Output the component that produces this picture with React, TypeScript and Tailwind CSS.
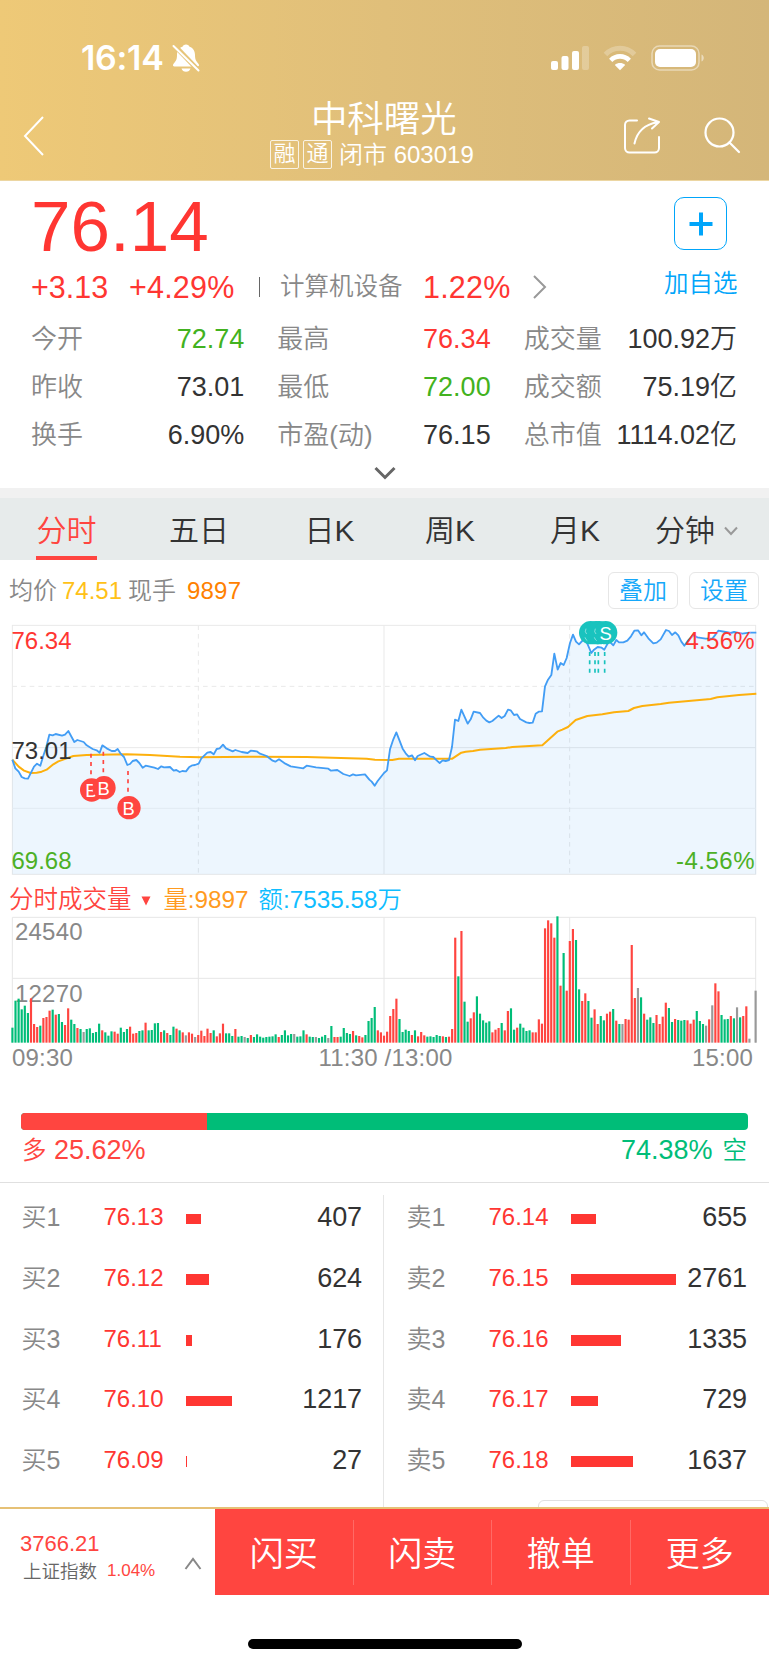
import clsx from "clsx";

type Quote = { label: string; value: string; color?: string };
type Order = { label: string; price: string; amount: number; bar: number };

const quotes: Quote[] = [
    { label: "今开", value: "72.74", color: "text-[#42b220]" },
    { label: "最高", value: "76.34", color: "text-[#ff3632]" },
    { label: "成交量", value: "100.92万" },
    { label: "昨收", value: "73.01" },
    { label: "最低", value: "72.00", color: "text-[#42b220]" },
    { label: "成交额", value: "75.19亿" },
    { label: "换手", value: "6.90%" },
    { label: "市盈(动)", value: "76.15" },
    { label: "总市值", value: "1114.02亿" },
];

const buyOrders: Order[] = [
    { label: "买1", price: "76.13", amount: 407, bar: 15.5 },
    { label: "买2", price: "76.12", amount: 624, bar: 23.5 },
    { label: "买3", price: "76.11", amount: 176, bar: 6 },
    { label: "买4", price: "76.10", amount: 1217, bar: 46 },
    { label: "买5", price: "76.09", amount: 27, bar: 1 },
];

const sellOrders: Order[] = [
    { label: "卖1", price: "76.14", amount: 655, bar: 25.5 },
    { label: "卖2", price: "76.15", amount: 2761, bar: 105 },
    { label: "卖3", price: "76.16", amount: 1335, bar: 50 },
    { label: "卖4", price: "76.17", amount: 729, bar: 27.5 },
    { label: "卖5", price: "76.18", amount: 1637, bar: 62 },
];

// chart data is in 3x units, the svg viewBox scales it down
const priceLine =
    "37,824 46,850 56,860 65,876 74,880 84,881 102,845 111,836 121,842 130,812 139,785 148,749 158,751 167,747 186,752 195,749 205,738 223,771 232,765 251,771 260,781 278,792 290,796 299,803 307,781 320,790 335,798 345,798 353,792 362,806 372,816 382,840 390,837 398,828 409,825 418,834 428,848 437,842 463,848 474,852 484,844 492,847 510,846 521,857 529,855 539,861 547,858 558,859 567,847 577,841 585,840 596,836 604,820 622,803 632,801 641,808 650,792 659,790 669,779 678,790 698,799 706,795 725,801 743,804 752,797 770,799 780,806 800,813 818,827 826,830 837,823 856,836 872,844 910,850 920,842 948,847 985,851 993,857 1012,855 1030,867 1049,873 1059,868 1068,871 1095,868 1108,884 1115,890 1124,902 1133,888 1152,864 1161,856 1170,793 1180,763 1189,742 1208,791 1217,805 1226,815 1236,811 1245,826 1253,813 1273,804 1291,815 1300,816 1310,826 1319,834 1328,826 1337,828 1347,825 1356,786 1365,704 1375,708 1384,674 1403,716 1412,703 1421,680 1440,684 1450,698 1459,707 1468,712 1477,708 1496,692 1505,699 1514,693 1524,674 1532,676 1542,690 1551,688 1560,702 1579,712 1588,714 1598,713 1607,686 1616,680 1626,679 1635,604 1644,584 1654,570 1663,506 1673,554 1682,534 1691,540 1700,519 1710,474 1719,449 1728,470 1737,478 1752,462 1763,478 1774,504 1782,494 1793,486 1805,488 1813,494 1827,468 1840,481 1849,465 1857,472 1870,472 1882,467 1893,454 1903,437 1914,436 1924,451 1932,442 1945,460 1960,475 1970,473 1982,463 1998,435 2007,438 2016,450 2026,442 2035,451 2044,470 2053,482 2063,468 2080,450 2092,457 2117,461 2137,461 2147,448 2155,437 2177,441 2192,444 2202,441 2227,446 2247,443 2269,443";

const averageLine =
    "37,824 56,845 72,857 92,864 110,863 125,860 140,854 160,838 175,829 200,820 220,813 260,810 380,808 450,810 540,815 600,817 750,815 920,816 1100,821 1125,824 1177,825 1197,821 1357,821 1384,803 1397,800 1419,798 1440,794 1517,789 1537,786 1627,781 1672,740 1687,734 1704,726 1727,705 1762,693 1807,688 1842,682 1885,678 1902,669 1927,663 1982,657 2007,653 2132,642 2152,637 2217,630 2269,626";

// one entry per minute: g = down, r = up, n = flat
const volumes = (
    "g45 g126 g132 g100 g111 g89 r133 r56 r47 g51 r74 r77 r96 g99 r84 g86 g62 r53 r103 g69 " +
    "g56 r44 g41 n32 g41 g43 g29 g32 g57 r37 g31 g21 g34 r33 r27 g45 g32 g41 r48 r27 " +
    "r29 g35 g37 r60 g37 g38 g58 g59 r32 g37 r29 g23 g48 r42 g37 r31 n22 r31 r27 n17 " +
    "r23 r36 r20 r42 r29 g37 r19 r28 r57 g28 g28 g20 r41 g18 g20 n17 g14 r23 g17 g25 " +
    "g18 g15 g17 g18 g19 g25 r17 g23 g37 g22 g26 n26 g18 g19 g37 r25 g18 g17 n17 g14 " +
    "g18 g23 n14 g50 r17 r17 g18 g44 g29 g26 r35 g22 r20 r16 g23 g65 g74 g107 r37 r31 " +
    "r21 r33 r80 r101 r132 g71 g32 g39 g35 r23 g37 r19 r32 r22 g18 g19 g17 g23 g20 r19 " +
    "g17 r18 r41 r315 g199 r335 g123 g63 r73 r91 g139 g87 g67 g60 g64 r31 r39 r44 g59 r37 " +
    "r95 g103 g39 r45 g57 g45 g35 g37 r31 r31 r70 r57 r343 r367 r358 r315 g379 r171 g269 r156 " +
    "r305 r341 g308 g160 r125 r148 g125 g75 r100 r56 g80 g67 r87 r93 g101 r66 g56 n56 r71 r69 " +
    "r293 r134 n164 g136 r87 g69 g76 g59 r83 r56 r78 r120 g104 g62 r71 g68 g66 g68 r67 r57 " +
    "r69 g95 g65 g56 n51 r70 n112 r178 r154 g83 g70 g71 r80 g73 n106 g76 r80 r109 n12 n0 n156"
).split(" ");

const volumeColors: Record<string, string> = { g: "#00bd78", r: "#ff4540", n: "#999999" };

const buyMarks = [
    { x: 275, y: 915, line: 273, from: 806 },
    { x: 312, y: 908, line: 310, from: 800 },
    { x: 387, y: 968, line: 384, from: 858 },
];
const sellMarks = [1772, 1788, 1798, 1817];

function StatusBar() {
    return (
        <div className="flex h-[58px] items-center pt-[1px] pl-[81px] pr-[64px]">
            <span className="font-['Inter'] text-[34px] leading-none font-semibold tracking-[-0.3px]">16:14</span>
            <svg className="ml-[8px] h-[30px] w-[28px]" viewBox="0 0 28 30">
                <path
                    d="M14 1.5c-1.800 0-3 1-3.500 2.200C6.500 5 5 8.500 5 12c0 5-1.500 6.500-3.600 9-.9 1.200-.3 2.500 1.100 2.500h23c1.400 0 2-1.300 1.100-2.500C24.500 18.500 23 17 23 12c0-3.500-1.500-7-5.500-8.300C17 2.500 15.800 1.500 14 1.500z"
                    fill="#fff"
                />
                <path d="M9.500 25.500h9c-.5 2-2.300 3.300-4.500 3.300s-4-1.300-4.500-3.300z" fill="#fff" />
                <path d="M1 1L28 29" stroke="#e7c57a" strokeWidth="5" />
                <path d="M1.500 3L26.500 27.500" stroke="#fff" strokeWidth="2" strokeLinecap="round" />
            </svg>
            <svg className="ml-auto h-[26px] w-[39px]" viewBox="0 0 39 26" fill="#fff">
                <rect x="0" y="16" width="7" height="9" rx="2" />
                <rect x="10.500" y="11" width="7" height="14" rx="2" />
                <rect x="21" y="6" width="7" height="19" rx="2" />
                <rect x="31" y="1" width="7" height="24" rx="2" opacity="0.25" />
            </svg>
            <svg className="ml-[13px] h-[26px] w-[34px]" viewBox="0 0 34 26" fill="none" stroke="#fff">
                <path d="M2.500 9.500C10.500 1.200 23.500 1.200 31.500 9.500" strokeWidth="5" opacity="0.25" />
                <path d="M7.700 15.300C13 10 21 10 26.300 15.300" strokeWidth="4.600" />
                <path d="M17 25.200L11.800 20c2.900-2.600 7.500-2.600 10.400 0z" fill="#fff" stroke="none" />
            </svg>
            <svg className="ml-[14px] h-[26px] w-[54px]" viewBox="0 0 54 26">
                <rect x="1" y="1" width="47" height="24" rx="7.500" fill="none" stroke="#fff" strokeWidth="1.500" opacity="0.45" />
                <rect x="4" y="4" width="41" height="18" rx="5" fill="#fff" />
                <path d="M50.500 9.500c3 1.200 3 5.800 0 7z" fill="#fff" opacity="0.5" />
            </svg>
        </div>
    );
}

function Header() {
    return (
        <header className="h-[181px] border-b border-[#ecd6a2] bg-linear-to-r from-[#eec977] via-[#e0bf7a] to-[#d4b679] pt-7 text-white">
            <StatusBar />
            <div className="flex h-[94px] items-start justify-between pt-[12px] pr-[28px] pl-[23px]">
                <svg className="mt-[17px] h-[42px] w-[22px]" viewBox="0 0 22 42" fill="none" stroke="#fff" strokeWidth="2">
                    <path d="M20 2L2 21L20 40" />
                </svg>
                <div className="ml-[225px] flex flex-col items-center">
                    <h1 className="h-[41px] pt-[1px] pl-[24px] text-[36.500px] leading-[42px]">中科曙光</h1>
                    <div className="flex h-[30px] items-center text-[24px] leading-[30px]">
                        <span className="mr-[4px] flex size-[29px] items-center justify-center rounded-[2px] border border-white/80 text-[22px]">
                            融
                        </span>
                        <span className="mr-[7px] flex size-[29px] items-center justify-center rounded-[2px] border border-white/80 text-[22px]">
                            通
                        </span>
                        <span className="pt-[2px]">闭市 603019</span>
                    </div>
                </div>
                <div className="ml-auto flex gap-[42px] pt-[19px]">
                    <svg className="h-[38px] w-[40px]" viewBox="0 0 40 38" fill="none" stroke="#fff" strokeWidth="2" strokeLinecap="round">
                        <path d="M16 3.500H8.500C6 3.500 4 5.500 4 8v23c0 2.500 2 4.500 4.500 4.500h25c2.500 0 4.500-2 4.500-4.500V20" />
                        <path d="M13.500 26.500C16 14.500 23 7.500 36.500 5.200M28 1.500L38 5l-7 6.500" strokeLinejoin="round" />
                    </svg>
                    <svg className="h-[38px] w-[38px]" viewBox="0 0 38 38" fill="none" stroke="#fff" strokeWidth="2.200">
                        <circle cx="16.500" cy="15.500" r="14" />
                        <path d="M26.500 25.500L36 35" strokeLinecap="round" />
                    </svg>
                </div>
            </div>
        </header>
    );
}

function Summary() {
    return (
        <section className="h-[307px] pt-[12px]">
            <div className="flex justify-between">
                <div className="pl-[31px] text-[#ff3632]">
                    <div className="h-[65px] pt-[1px] text-[71px] leading-[65px]">76.14</div>
                    <div className="mt-[11px] flex h-[36px] items-center text-[30.500px] leading-[36px]">
                        <span className="w-[98px]">+3.13</span>
                        <span className="w-[130px] tracking-[0.2px]">+4.29%</span>
                        <span className="mr-[20px] h-[20px] w-px bg-[#666]" />
                        <span className="w-[143px] text-[24.500px] text-[#888]">计算机设备</span>
                        <span className="w-[110px] tracking-[0.2px]">1.22%</span>
                        <svg className="h-[24px] w-[14px]" viewBox="0 0 14 24" fill="none" stroke="#999" strokeWidth="2">
                            <path d="M1 1L12 12L1 23" />
                        </svg>
                    </div>
                </div>
                <button className="mr-[30px] flex w-[76px] flex-col items-start pt-[4px] text-[24.500px] leading-[30px] text-[#00a5fa]">
                    <span className="ml-[11px] flex size-[53px] items-center justify-center rounded-[10px] border-[1.500px] border-[#00a5fa]">
                        <svg className="size-[24px]" viewBox="0 0 24 24" stroke="#00a5fa" strokeWidth="4">
                            <path d="M12 0.500V23.500M0.500 12H23.500" />
                        </svg>
                    </span>
                    <span className="mt-[19px] ml-px">加自选</span>
                </button>
            </div>
            <div className="mt-[10px] grid grid-cols-3 gap-x-[33px] pr-[32px] pl-[31px]">
                {quotes.map((quote) => (
                    <div key={quote.label} className="flex h-[48px] items-center justify-between whitespace-nowrap">
                        <span className="text-[26px] leading-[48px] text-[#888]">{quote.label}</span>
                        <span className={clsx("text-[27px] leading-[48px]", quote.color ?? "text-[#333]")}>{quote.value}</span>
                    </div>
                ))}
            </div>
            <svg className="mx-auto mt-[6px] h-[16px] w-[24px]" viewBox="0 0 24 16" fill="none" stroke="#666" strokeWidth="3">
                <path d="M2.500 3L12 12.500L21.500 3" />
            </svg>
        </section>
    );
}

function Tabs() {
    return (
        <nav className="grid h-[72px] grid-cols-[133px_132px_129px_112px_138px_1fr] border-t-[10px] border-[#f1f1f1] bg-[#e7ebeb] text-center text-[30px] leading-[65px] text-[#333]">
            <div className="flex flex-col items-center text-[#ff4540]">
                <span className="h-[58px]">分时</span>
                <span className="h-[4px] w-[61px] bg-[#ff4540]" />
            </div>
            <span>五日</span>
            <span>日K</span>
            <span>周K</span>
            <span>月K</span>
            <span className="flex items-center pl-[11px]">
                分钟
                <svg className="ml-[9px] h-[10px] w-[14px]" viewBox="0 0 14 10" fill="none" stroke="#999" strokeWidth="2">
                    <path d="M1 1.500L7 8L13 1.500" />
                </svg>
            </span>
        </nav>
    );
}

function PriceChart() {
    return (
        <div className="relative h-[272px] text-[24px] leading-[28px]">
            <svg className="h-[270px] w-[769px]" viewBox="0 375 2307 810" fill="none">
                <g stroke="#e9e9e9" strokeWidth="3">
                    <rect x="37" y="421" width="2230" height="747" />
                    <path d="M37 788H2267M1152 421V1168" />
                    <path d="M37 970H2267" stroke="#f2f2f2" />
                    <path d="M37 604H2267M595 421V1168M1709 421V1168" strokeDasharray="14 12" />
                </g>
                <polygon points={`37,1168 ${priceLine} 2269,1168`} fill="#3c9bf0" fillOpacity="0.09" />
                <polyline points={averageLine} stroke="#fdb00d" strokeWidth="6" strokeLinejoin="round" />
                <polyline points={priceLine} stroke="#429df5" strokeWidth="5.500" strokeLinejoin="round" />
                {buyMarks.map((mark) => (
                    <g key={mark.x}>
                        <path d={`M${mark.line} ${mark.from}v64`} stroke="#ff4540" strokeWidth="5" strokeDasharray="12 13" />
                        <circle cx={mark.x} cy={mark.y} r="35" fill="#ff4540" />
                        <text x={mark.x - 1} y={mark.y + 22} fill="#fff" fontSize="55" textAnchor="middle">
                            B
                        </text>
                    </g>
                ))}
                {sellMarks.map((x) => (
                    <g key={x}>
                        <path d={`M${x - 3} 501v64`} stroke="#19c3be" strokeWidth="5" strokeDasharray="12 13" />
                        <circle cx={x} cy="443" r="35" fill="#19c3be" />
                    </g>
                ))}
                <path d="M1758 431q-5 10 2 16M1755 457q2 7 7 10M1786 431q-5 10 2 16M1783 457q2 7 7 10" stroke="#fff" strokeWidth="2" opacity="0.7" />
                <text x="1817" y="466" fill="#fff" fontSize="55" textAnchor="middle">
                    S
                </text>
            </svg>
            <span className="absolute top-[17px] left-[11.500px] text-[#ff3632]">76.34</span>
            <span className="absolute top-[127px] left-[11.500px] text-[#333]">73.01</span>
            <span className="absolute top-[237px] left-[11.500px] text-[#4cb025]">69.68</span>
            <span className="absolute top-[17px] right-[14px] tracking-[0.3px] text-[#ff3632]">4.56%</span>
            <span className="absolute top-[237px] right-[14px] tracking-[0.5px] text-[#4cb025]">-4.56%</span>
        </div>
    );
}

function VolumeChart() {
    return (
        <div className="relative h-[128px] text-[24px] leading-[28px] text-[#888]">
            <span className="absolute top-[3px] left-[15px] tracking-[0.2px]">24540</span>
            <span className="absolute top-[65px] left-[15px] tracking-[0.2px]">12270</span>
            <svg className="relative h-[128px] w-[769px]" viewBox="0 120 2307 384">
                <path
                    d="M37 504V127H2267V504M37 310H2267M595 127V504M1152 127V504M1709 127V504"
                    fill="none"
                    stroke="#e6e6e6"
                    strokeWidth="3"
                />
                {volumes.map((volume, i) => {
                    const height = Number(volume.slice(1));
                    return (
                        <rect
                            key={i}
                            x={34 + i * 9.29}
                            y={503 - height}
                            width="6.500"
                            height={height}
                            fill={volumeColors[volume[0]]}
                        />
                    );
                })}
            </svg>
        </div>
    );
}

function OrderList({ orders, className }: { orders: Order[]; className: string }) {
    return (
        <div className={clsx("pt-[4px]", className)}>
            {orders.map((order) => (
                <div key={order.label} className="flex h-[60.700px] items-center leading-[60px]">
                    <span className="w-[82px] text-[25px] text-[#888]">{order.label}</span>
                    <span className="w-[82px] text-[24px] text-[#ff3632]">{order.price}</span>
                    <span className="mt-[3px] h-[10.700px] bg-[#ff3632]" style={{ width: order.bar }} />
                    <span className="ml-auto text-[27px] tracking-[-0.1px] text-[#333]">{order.amount}</span>
                </div>
            ))}
        </div>
    );
}

function BottomBar() {
    return (
        <footer className="relative flex h-[88px] border-t-2 border-[#e6c176] bg-white">
            <div className="flex w-[215px] items-center justify-between pt-[10px] pr-[13px] pl-[20px] text-[#ff4540]">
                <div>
                    <div className="text-[22px] leading-[28px]">3766.21</div>
                    <div className="flex text-[17px] leading-[26px]">
                        <span className="mr-[10px] pt-[1px] pl-[3px] text-[18.500px] text-[#666]">上证指数</span>
                        1.04%
                    </div>
                </div>
                <svg className="mt-[12px] h-[13px] w-[18px]" viewBox="0 0 18 13" fill="none" stroke="#888" strokeWidth="2">
                    <path d="M1.500 12L9 2L16.500 12" />
                </svg>
            </div>
            <div className="grid flex-1 grid-cols-4 items-center bg-[#ff4540] text-center text-[34px] text-white">
                {["闪买", "闪卖", "撤单", "更多"].map((name) => (
                    <button key={name} className="h-[65px] border-r border-white/20 pt-[2px] leading-[65px] last:border-r-0">
                        {name}
                    </button>
                ))}
            </div>
        </footer>
    );
}

export default function App() {
    return (
        <div className="h-[1665px] w-[769px] overflow-hidden bg-white font-['Liberation_Sans','Noto_Sans_CJK_SC',sans-serif] font-[350]">
            <Header />
            <Summary />
            <Tabs />
            <div className="flex h-[50px] items-center pt-[11px] pr-[10px] pl-[9px] text-[24px] leading-[36px]">
                <span className="w-[53px] text-[#888]">均价</span>
                <span className="w-[66px] text-[#ffc117]">74.51</span>
                <span className="w-[59px] text-[#888]">现手</span>
                <span className="tracking-[0.2px] text-[#ff8100]">9897</span>
                <button className="ml-auto h-[37px] w-[70px] rounded-[6px] border border-[#e6e6e6] text-[#16a8fa]">叠加</button>
                <button className="ml-[11px] h-[37px] w-[70px] rounded-[6px] border border-[#e6e6e6] text-[#16a8fa]">设置</button>
            </div>
            <PriceChart />
            <div className="flex h-[33px] items-center pt-[1px] pl-[9px] text-[24.500px] leading-[33px]">
                <span className="text-[#ff4540]">分时成交量</span>
                <svg className="mt-[3px] mr-[13px] ml-[9px] size-[10px]" viewBox="0 0 10 10" fill="#ff4540">
                    <path d="M0.500 0.500h9L5 9.500z" />
                </svg>
                <span className="mr-[10px] text-[24.300px] text-[#ff9b1f]">量:9897</span>
                <span className="text-[24.300px] text-[#0fbdff]">额:7535.58万</span>
            </div>
            <VolumeChart />
            <div className="flex h-[70px] justify-between pr-[16px] pl-[12px] text-[24px] leading-[29px] tracking-[0.2px] text-[#888]">
                <span>09:30</span>
                <span className="pl-[6px]">11:30 /13:00</span>
                <span>15:00</span>
            </div>
            <div className="mr-[21px] ml-[20.500px] flex h-[17px] overflow-hidden rounded-[4px] bg-[#00bd78]">
                <div className="bg-[#ff4540]" style={{ width: "25.62%" }} />
            </div>
            <div className="flex h-[53px] justify-between border-b border-[#e0e0e0] px-[22px] text-[27px] leading-[40px]">
                <span className="text-[#ff4540]">
                    <span className="text-[24.500px]">多</span> 25.62%
                </span>
                <span className="text-[#00bd78]">
                    74.38%<span className="pl-[10px] text-[24.500px]">空</span>
                </span>
            </div>
            <div className="relative flex h-[324px] overflow-hidden">
                <OrderList orders={buyOrders} className="w-[383px] pr-[21px] pl-[21.500px]" />
                <div className="mt-[12px] w-px bg-[#e6e6e6]" />
                <OrderList orders={sellOrders} className="flex-1 pr-[22px] pl-[22.500px]" />
                <div className="absolute top-[317px] right-[1px] h-[30px] w-[230px] rounded-[6px] border border-[#e0e0e0] bg-white" />
            </div>
            <BottomBar />
            <div className="mx-auto mt-[44px] h-[10px] w-[274px] rounded-full bg-black" />
        </div>
    );
}
